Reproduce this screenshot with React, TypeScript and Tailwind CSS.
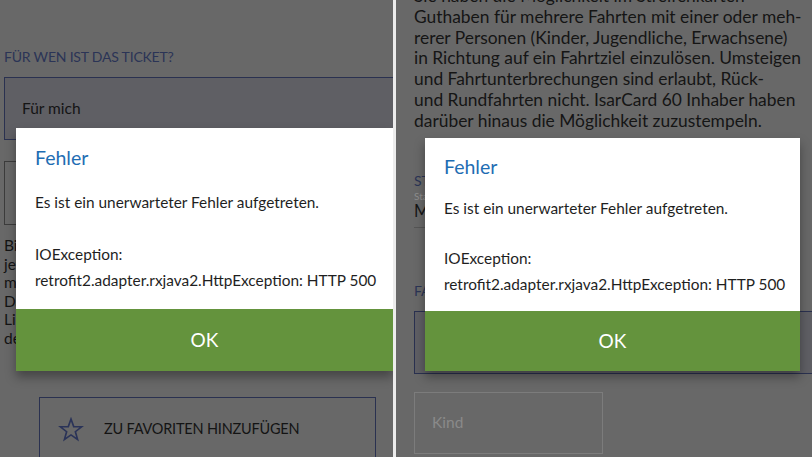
import React from 'react';

const font = { fontFamily: 'Lato, "Noto Sans", sans-serif' };

interface DialogProps {
  className: string;
  compact?: boolean;
}

// error dialog shown over the dimmed screen
const ErrorDialog: React.FC<DialogProps> = ({ className, compact }) => {
  return (
    <div className={`absolute bg-white shadow-[0_6px_10px_rgba(0,0,0,0.35)] ${className}`}>
      <div className={compact ? 'px-[19px] pt-[16px] pb-[14px]' : 'px-[19px] pt-[17px] pb-[16px]'}>
        <div className="text-[19.5px] leading-[26px] text-[#1e6db3]">Fehler</div>
        <div className={`${compact ? 'mt-[17px]' : 'mt-[20px]'} text-[15.4px] leading-[22px] text-[#1f1f1f]`}>
          Es ist ein unerwarteter Fehler aufgetreten.
        </div>
        <div className={`${compact ? 'mt-[26px]' : 'mt-[28px]'} text-[15.4px] leading-[26px] text-[#1f1f1f]`}>
          <div>IOException:</div>
          <div className="whitespace-nowrap">retrofit2.adapter.rxjava2.HttpException: HTTP 500</div>
        </div>
      </div>
      <div className={`${compact ? 'h-[60px]' : 'h-[62px]'} bg-[#64933d] flex items-center justify-center text-white text-[19px]`}>
        OK
      </div>
    </div>
  );
};

const StarIcon = () => (
  <svg width="26" height="25" viewBox="0 0 24 24" fill="none" stroke="#2a3358" strokeWidth="1.6" strokeLinejoin="miter">
    <polygon points="12,2 14.6,9.2 22.2,9.4 16.2,14.1 18.3,21.5 12,17.2 5.7,21.5 7.8,14.1 1.8,9.4 9.4,9.2" />
  </svg>
);

const LeftScreen = () => {
  const lines = [
    'Bitte wählen Sie aus, für wen das Ticket',
    'jeweils gelten soll. Tickets können auch',
    'mit anderen Personen geteilt werden.',
    'Das Ticket ist nur mit gültigem Ausweis',
    'Lichtbildausweis gültig und wird bei',
    'der Kontrolle vorgezeigt.',
  ];
  return (
    <div className="relative w-[393px] h-full bg-[#686868] overflow-hidden pl-[4px]" style={font}>
      <div className="pt-[47px] text-[14px] leading-[20px] text-[#2b3456] tracking-[-0.2px]">FÜR WEN IST DAS TICKET?</div>
      <div className="mt-[10px] h-[63px] -mr-[2px] border border-[#2a3150] bg-[#5f5f64] flex items-center pl-[17px] text-[15.5px] text-[#141414]">
        Für mich
      </div>
      <div className="mt-[21px] h-[64px] -mr-[2px] border border-[#3c3c3c] flex items-center pl-[17px] text-[15.5px] text-[#141414]">
        Für jemand anderen
      </div>
      <div className="mt-[11px] text-[15.5px] leading-[18.5px] text-[#141414]">
        {lines.map((l) => (
          <div key={l} className="whitespace-nowrap">{l}</div>
        ))}
      </div>
      <div className="mt-[50px] ml-[35px] w-[337px] h-[64px] border border-[#2a3150] flex items-center pl-[18px] gap-[20px]">
        <StarIcon />
        <span className="text-[14.5px] text-[#141414] tracking-[-0.2px]">ZU FAVORITEN HINZUFÜGEN</span>
      </div>
      <ErrorDialog className="left-[16px] top-[128px] w-[377px]" />
    </div>
  );
};

const RightScreen = () => {
  const lines = [
    'Sie haben die Möglichkeit im Streifenkarten-',
    'Guthaben für mehrere Fahrten mit einer oder meh-',
    'rerer Personen (Kinder, Jugendliche, Erwachsene)',
    'in Richtung auf ein Fahrtziel einzulösen. Umsteigen',
    'und Fahrtunterbrechungen sind erlaubt, Rück-',
    'und Rundfahrten nicht. IsarCard 60 Inhaber haben',
    'darüber hinaus die Möglichkeit zuzustempeln.',
  ];
  return (
    <div className="relative flex-1 h-full bg-[#686868] overflow-hidden pl-[18px]" style={font}>
      <div className="-mt-[14px] text-[17.4px] leading-[20.8px] text-[#151515]">
        {lines.map((l) => (
          <div key={l} className="whitespace-nowrap">{l}</div>
        ))}
      </div>
      <div className="mt-[39px] text-[14px] leading-[20px] text-[#2b3456]">STARTHALTESTELLE</div>
      <div className="text-[10px] leading-[10px] text-[#8e8e8e]">Starthaltestelle</div>
      <div className="w-[350px] border-b border-[#555] pb-[6px] text-[16.5px] leading-[20px] text-[#151515]">München Hbf</div>
      <div className="mt-[53px] text-[14px] leading-[20px] text-[#2b3456]">FAHRGÄSTE</div>
      <div className="mt-[10px] h-[63px] -mr-[2px] border border-[#2a3150] bg-[#5f5f64] flex items-center pl-[17px] text-[15.5px] text-[#141414]">
        Erwachsener
      </div>
      <div className="mt-[18px] w-[189px] h-[62px] border border-[#7c7c7c] flex items-center pl-[17px] text-[15.5px] text-[#8a8a8a]">
        Kind
      </div>
      <ErrorDialog className="left-[29px] top-[138px] w-[375px]" compact />
    </div>
  );
};

export default function App() {
  return (
    <div className="w-[812px] h-[457px] flex overflow-hidden bg-[#e9e9e9]">
      <LeftScreen />
      <div className="w-[3px] h-full bg-[#ececec]" />
      <RightScreen />
    </div>
  );
}
